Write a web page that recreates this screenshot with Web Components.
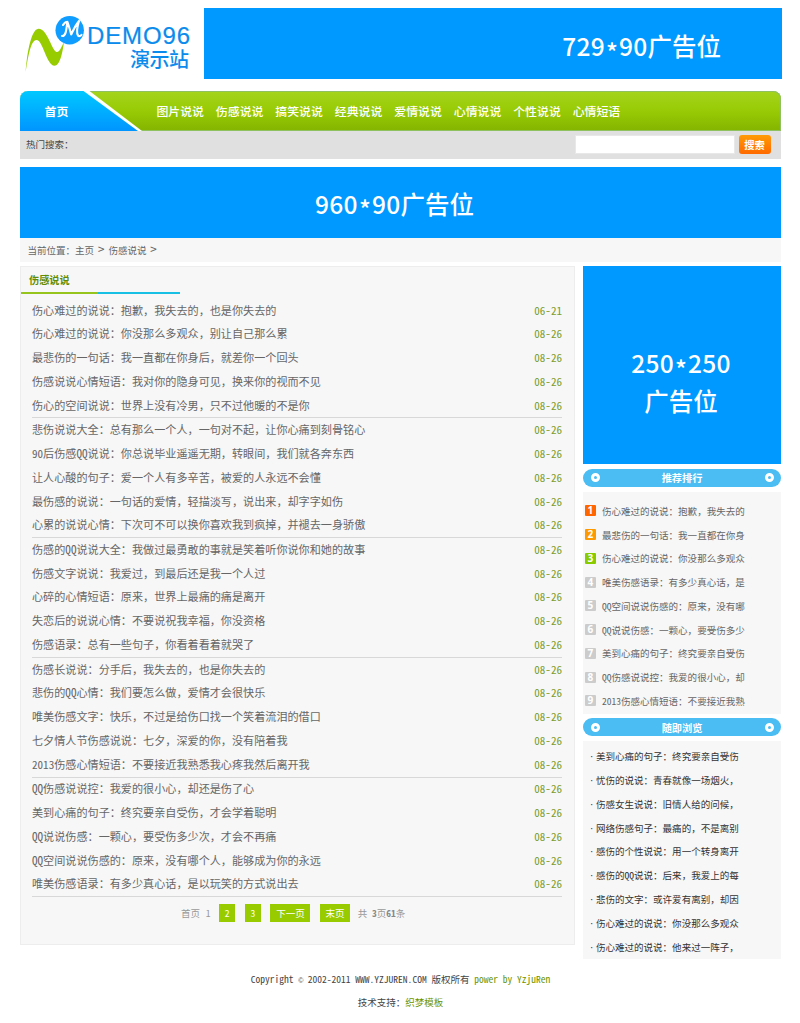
<!DOCTYPE html>
<html lang="zh-CN">
<head>
<meta charset="utf-8">
<title>伤感说说</title>
<style>
body {
    margin: 0;
    background: #fff;
    color: #666;
    font-family: "Noto Sans CJK SC", "Liberation Sans", sans-serif;
    font-size: 9.52px;
}
</style>
</head>
<body>
<site-page></site-page>
<script>
const MENU = ['图片说说', '伤感说说', '搞笑说说', '经典说说', '爱情说说', '心情说说', '个性说说', '心情短语'];

const ARTICLES = [
    '伤心难过的说说：抱歉，我失去的，也是你失去的',
    '伤心难过的说说：你没那么多观众，别让自己那么累',
    '最悲伤的一句话：我一直都在你身后，就差你一个回头',
    '伤感说说心情短语：我对你的隐身可见，换来你的视而不见',
    '伤心的空间说说：世界上没有冷男，只不过他暖的不是你',
    '悲伤说说大全：总有那么一个人，一句对不起，让你心痛到刻骨铭心',
    '90后伤感QQ说说：你总说毕业遥遥无期，转眼间，我们就各奔东西',
    '让人心酸的句子：爱一个人有多辛苦，被爱的人永远不会懂',
    '最伤感的说说：一句话的爱情，轻描淡写，说出来，却字字如伤',
    '心累的说说心情：下次可不可以换你喜欢我到疯掉，并褪去一身骄傲',
    '伤感的QQ说说大全：我做过最勇敢的事就是笑着听你说你和她的故事',
    '伤感文字说说：我爱过，到最后还是我一个人过',
    '心碎的心情短语：原来，世界上最痛的痛是离开',
    '失恋后的说说心情：不要说祝我幸福，你没资格',
    '伤感语录：总有一些句子，你看着看着就哭了',
    '伤感长说说：分手后，我失去的，也是你失去的',
    '悲伤的QQ心情：我们要怎么做，爱情才会很快乐',
    '唯美伤感文字：快乐，不过是给伤口找一个笑着流泪的借口',
    '七夕情人节伤感说说：七夕，深爱的你，没有陪着我',
    '2013伤感心情短语：不要接近我熟悉我心疼我然后离开我',
    'QQ伤感说说控：我爱的很小心，却还是伤了心',
    '美到心痛的句子：终究要亲自受伤，才会学着聪明',
    'QQ说说伤感：一颗心，要受伤多少次，才会不再痛',
    'QQ空间说说伤感的：原来，没有哪个人，能够成为你的永远',
    '唯美伤感语录：有多少真心话，是以玩笑的方式说出去'
];

const RANKING = [
    '伤心难过的说说：抱歉，我失去的',
    '最悲伤的一句话：我一直都在你身',
    '伤心难过的说说：你没那么多观众',
    '唯美伤感语录：有多少真心话，是',
    'QQ空间说说伤感的：原来，没有哪',
    'QQ说说伤感：一颗心，要受伤多少',
    '美到心痛的句子：终究要亲自受伤',
    'QQ伤感说说控：我爱的很小心，却',
    '2013伤感心情短语：不要接近我熟'
];

const RANDOM = [
    '美到心痛的句子：终究要亲自受伤',
    '忧伤的说说：青春就像一场烟火，',
    '伤感女生说说：旧情人给的问候，',
    '网络伤感句子：最痛的，不是离别',
    '感伤的个性说说：用一个转身离开',
    '感伤的QQ说说：后来，我爱上的每',
    '悲伤的文字：或许爱有离别，却因',
    '伤心难过的说说：你没那么多观众',
    '伤心难过的说说：他来过一阵子，'
];

// Latin letters and digits take half the width of a Chinese character
class HalfWidth extends HTMLElement {
    constructor() {
        super();
        // no whitespace round the slot, it would show inside a line of text
        this.attachShadow({ mode: 'open' }).innerHTML =
            '<style>:host { display: inline; font-feature-settings: "hwid"; }</style><slot></slot>';
    }
}
window.customElements.define('half-width', HalfWidth);

function halfWidth(text) {
    return text.replace(/[A-Za-z0-9]+/g, '<half-width>$&</half-width>');
}

class SiteLogo extends HTMLElement {
    constructor() {
        super();
        this.attachShadow({ mode: 'open' }).innerHTML = `
        <style>
        :host { display: block; width: 184px; height: 72px; }
        svg { display: block; }
        text { font-family: "Liberation Sans", "Noto Sans CJK SC", sans-serif; fill: #0b8cec; }
        </style>
        <svg width="184" height="72" viewBox="20 8 184 72">
            <circle cx="69.700" cy="30.300" r="14.200" fill="#0f9dff"/>
            <path d="M25.700 72C26.500 58 30.500 29 38.500 28.700C47.500 28.500 52 51.500 57 52C59.500 52 61.500 47 64 42C62.500 53 60 65.700 54.500 65.700C46.500 65.500 43 40 36.500 40C30.500 40 28 58 25.700 72Z" fill="#96cc00"/>
            <path d="M62 36C66 36.500 66.500 29 67.300 21.700C69 26 70 30 71.200 34.500C73.500 30 75.500 25 79 21C77.200 27 76.500 33 78 35.500C79 36.800 80.500 36 81.500 34.800M63 25C64.500 22.500 65.500 21.700 67.300 21.700" fill="none" stroke="#fff" stroke-width="2.100" stroke-linecap="round" stroke-linejoin="round"/>
            <text x="87" y="43.500" font-size="24" textLength="103" stroke="#0b8cec" stroke-width=".2">DEMO96</text>
            <text x="130" y="67" font-size="20" font-weight="500" textLength="59">演示站</text>
        </svg>`;
    }
}
window.customElements.define('site-logo', SiteLogo);

class AdBanner extends HTMLElement {
    constructor() {
        super();
        this.attachShadow({ mode: 'open' }).innerHTML = `
        <style>
        :host {
            display: flex;
            align-items: center;
            justify-content: center;
            box-sizing: border-box;
            background: #0099ff;
            color: #fff;
            font-size: 24.500px;
            font-weight: 500;
            line-height: 38px;
            text-align: center;
        }
        .size { letter-spacing: .3px; }
        .star {
            display: inline-block;
            width: 14px;
            line-height: 1px;
            vertical-align: -5.500px;
            letter-spacing: 0;
        }
        </style>
        <div><span class="size"></span><slot></slot></div>`;
    }
    connectedCallback() {
        const [w, h] = this.getAttribute('size').split('*');
        this.shadowRoot.querySelector('.size').innerHTML = `${w}<span class="star">*</span>${h}`;
    }
}
window.customElements.define('ad-banner', AdBanner);

class NavBar extends HTMLElement {
    constructor() {
        super();
        this.attachShadow({ mode: 'open' }).innerHTML = `
        <style>
        :host {
            display: flex;
            height: 40px;
            box-sizing: border-box;
            overflow: hidden;
            border-radius: 8px 8px 0 0;
            background: linear-gradient(#a5d41c, #98cb05 50%, #84b400);
            box-shadow: inset -1px 0 #8fc161, inset 0 1px #8fc161, inset 0 -1px #8fc161;
            color: #fff;
            font-size: 11.900px;
            font-weight: 500;
            line-height: 39px;
        }
        .home {
            flex: none;
            width: 124px;
            height: 40px;
            padding-right: 12.400px;
            background: #fff;
            clip-path: polygon(0 0, 69.500px 0, 122px 100%, 0 100%);
        }
        .home span {
            display: block;
            height: 40px;
            padding-left: 24.500px;
            font-weight: 700;
            background: linear-gradient(#00c8ff, #0095ff);
            clip-path: polygon(0 0, 63.500px 0, 118px 100%, 0 100%);
        }
        nav { display: flex; gap: 11.900px; }
        </style>
        <div class="home"><span>首页</span></div>
        <nav></nav>`;
    }
    connectedCallback() {
        this.shadowRoot.querySelector('nav').innerHTML = MENU.map(m => `<span>${m}</span>`).join('');
    }
}
window.customElements.define('nav-bar', NavBar);

class SearchBar extends HTMLElement {
    constructor() {
        super();
        this.attachShadow({ mode: 'open' }).innerHTML = `
        <style>
        :host {
            display: flex;
            align-items: center;
            height: 27.500px;
            box-sizing: border-box;
            padding: 0 10.500px 0 6px;
            background: #e0e0e0;
            color: #444;
        }
        label { flex: 1; margin-top: -1px; }
        input {
            width: 160px;
            height: 19px;
            box-sizing: border-box;
            margin: 0 4px 0 0;
            padding: 0;
            border: 1px solid #e8e8e8;
            background: #fff;
        }
        button {
            width: 32px;
            height: 19px;
            padding: 0;
            border: 0;
            border-radius: 3px;
            background: linear-gradient(#ff9a05, #ff6a00);
            color: #fff;
            font: 700 10.300px/18px "Noto Sans CJK SC", sans-serif;
        }
        </style>
        <label>热门搜索：</label>
        <input type="text">
        <button>搜索</button>`;
    }
}
window.customElements.define('search-bar', SearchBar);

class ArticleRow extends HTMLElement {
    constructor() {
        super();
        this.attachShadow({ mode: 'open' }).innerHTML = `
        <style>
        :host {
            display: flex;
            justify-content: space-between;
            height: 23.790px;
            line-height: 23.790px;
            font-size: 11.110px;
            white-space: nowrap;
        }
        time { color: #7c9d2c; font-feature-settings: "hwid"; }
        </style>
        <span><slot></slot></span>
        <time></time>`;
    }
    connectedCallback() {
        this.shadowRoot.querySelector('time').textContent = this.getAttribute('date');
    }
}
window.customElements.define('article-row', ArticleRow);

class PageNumbers extends HTMLElement {
    constructor() {
        super();
        this.attachShadow({ mode: 'open' }).innerHTML = `
        <style>
        :host {
            display: flex;
            align-items: center;
            height: 18px;
            line-height: 18px;
            padding-left: 149px;
            color: #999;
            white-space: nowrap;
            font-feature-settings: "hwid";
        }
        a { background: #99cc00; color: #fff; padding: 0 5.700px; margin-right: 9.500px; }
        .one { margin: 0 8.700px 0 5.700px; }
        .total { margin-left: -2px; }
        b { color: #888; }
        </style>
        <span>首页</span><span class="one">1</span><a>2</a><a>3</a><a>下一页</a><a>末页</a><span class="total">共 <b>3</b>页<b>61</b>条</span>`;
    }
}
window.customElements.define('page-numbers', PageNumbers);

class ArticleList extends HTMLElement {
    constructor() {
        super();
        this.attachShadow({ mode: 'open' }).innerHTML = `
        <style>
        :host {
            display: block;
            width: 555px;
            height: 679.500px;
            box-sizing: border-box;
            border: 1px solid #ededed;
            background: #f7f7f7;
        }
        h2 {
            margin: 0;
            padding-left: 8px;
            font-size: 10.200px;
            line-height: 25.500px;
            color: #5f8c00;
        }
        .line {
            width: 158.500px;
            height: 2px;
            background: linear-gradient(90deg, #96c31c 77px, #18c0e4 77px);
        }
        .rows { padding: 4.500px 12px 0 11px; }
        .group { border-bottom: 1px solid #d8d8d8; margin-bottom: -.21px; }
        page-numbers { margin-top: 7px; }
        </style>
        <h2>伤感说说</h2>
        <div class="line"></div>
        <div class="rows"></div>`;
    }
    connectedCallback() {
        let html = '';
        for (let i = 0; i < ARTICLES.length; i += 5) {
            const rows = ARTICLES.slice(i, i + 5).map((title, j) => {
                return `<article-row date="${i + j == 0 ? '06-21' : '08-26'}">${halfWidth(title)}</article-row>`;
            });
            html += `<div class="group">${rows.join('')}</div>`;
        }
        this.shadowRoot.querySelector('.rows').innerHTML = html + '<page-numbers></page-numbers>';
    }
}
window.customElements.define('article-list', ArticleList);

class SideTitle extends HTMLElement {
    constructor() {
        super();
        this.attachShadow({ mode: 'open' }).innerHTML = `
        <style>
        :host {
            display: flex;
            align-items: center;
            justify-content: space-between;
            height: 18px;
            box-sizing: border-box;
            padding: 0 7.500px;
            border-radius: 9px;
            background: #4bbdf3;
            color: #fff;
            font-size: 10.200px;
            font-weight: 700;
            line-height: 17px;
        }
        i {
            width: 3px;
            height: 3px;
            border: 3px solid #fff;
            border-radius: 50%;
        }
        </style>
        <i></i><slot></slot><i></i>`;
    }
}
window.customElements.define('side-title', SideTitle);

class RankItem extends HTMLElement {
    constructor() {
        super();
        this.attachShadow({ mode: 'open' }).innerHTML = `
        <style>
        :host {
            display: flex;
            align-items: center;
            gap: 6.300px;
            height: 23.790px;
            line-height: 23.790px;
            white-space: nowrap;
        }
        b {
            width: 10.700px;
            height: 11px;
            margin-top: -2px;
            border-radius: 1px;
            background: var(--badge, #ccc);
            color: #fff;
            font: 700 10px/11px "Open Sans", sans-serif;
            text-align: center;
        }
        </style>
        <b></b><span><slot></slot></span>`;
    }
    connectedCallback() {
        this.shadowRoot.querySelector('b').textContent = this.getAttribute('no');
    }
}
window.customElements.define('rank-item', RankItem);

class SideColumn extends HTMLElement {
    constructor() {
        super();
        this.attachShadow({ mode: 'open' }).innerHTML = `
        <style>
        :host { display: block; width: 198px; }
        ad-banner { height: 198.500px; padding: 35px 2px 0 0; }
        side-title { margin: 4.500px 0 5px; }
        .panel { background: #f7f7f7; box-sizing: border-box; }
        .rank { height: 222px; padding: 8.300px 0 0 2px; }
        .random { height: 218px; padding: 4.300px 0 0 7px; color: #333; }
        .random p {
            display: flex;
            margin: 0;
            height: 23.790px;
            line-height: 23.790px;
            white-space: nowrap;
        }
        .random i { flex: none; width: 6px; font: 10px/23.790px "Liberation Sans", sans-serif; }
        rank-item:nth-child(1) { --badge: #ff6600; }
        rank-item:nth-child(2) { --badge: #ff9900; }
        rank-item:nth-child(3) { --badge: #88cc00; }
        </style>
        <ad-banner size="250*250"><br>广告位</ad-banner>
        <side-title>推荐排行</side-title>
        <div class="panel rank"></div>
        <side-title>随即浏览</side-title>
        <div class="panel random"></div>`;
    }
    connectedCallback() {
        this.shadowRoot.querySelector('.rank').innerHTML =
            RANKING.map((t, i) => `<rank-item no="${i + 1}">${halfWidth(t)}</rank-item>`).join('');
        this.shadowRoot.querySelector('.random').innerHTML =
            RANDOM.map(t => `<p><i>·</i><span>${halfWidth(t)}</span></p>`).join('');
    }
}
window.customElements.define('side-column', SideColumn);

class SiteFooter extends HTMLElement {
    constructor() {
        super();
        this.attachShadow({ mode: 'open' }).innerHTML = `
        <style>
        :host { display: block; text-align: center; line-height: 23.790px; color: #444; }
        p { margin: 0; }
        a { color: #6d9400; }
        .c { display: inline-block; width: 4.760px; font: 7px "Liberation Sans", sans-serif; }
        </style>
        <p><half-width>Copyright <span class="c">©</span> 2002-2011 WWW.YZJUREN.COM </half-width>版权所有<half-width> <a>power by YzjuRen</a></half-width></p>
        <p>技术支持：<a>织梦模板</a></p>`;
    }
}
window.customElements.define('site-footer', SiteFooter);

class SitePage extends HTMLElement {
    constructor() {
        super();
        this.attachShadow({ mode: 'open' }).innerHTML = `
        <style>
        :host { display: block; width: 761px; height: 1023px; box-sizing: border-box; margin-left: 20px; padding-top: 8px; }
        header { display: flex; height: 83px; width: 762px; }
        header ad-banner { flex: 1; height: 71px; justify-content: flex-end; padding: 5px 61px 0 0; }
        .wide { height: 71.500px; margin-top: 8px; padding: 3px 12px 0 0; }
        .crumbs { display: flex; height: 23.500px; line-height: 24.500px; padding-left: 7.500px; background: #f7f7f7; }
        .crumbs half-width { width: 14.300px; text-align: center; font-size: 13px; line-height: 22.500px; }
        main { display: flex; justify-content: space-between; margin-top: 4px; height: 702px; }
        </style>
        <header>
            <site-logo></site-logo>
            <ad-banner size="729*90">广告位</ad-banner>
        </header>
        <nav-bar></nav-bar>
        <search-bar></search-bar>
        <ad-banner class="wide" size="960*90">广告位</ad-banner>
        <div class="crumbs">
            <span>当前位置：主页</span><half-width>&gt;</half-width><span>伤感说说</span><half-width>&gt;</half-width>
        </div>
        <main>
            <article-list></article-list>
            <side-column></side-column>
        </main>
        <site-footer></site-footer>`;
    }
}
window.customElements.define('site-page', SitePage);
</script>
</body>
</html>
